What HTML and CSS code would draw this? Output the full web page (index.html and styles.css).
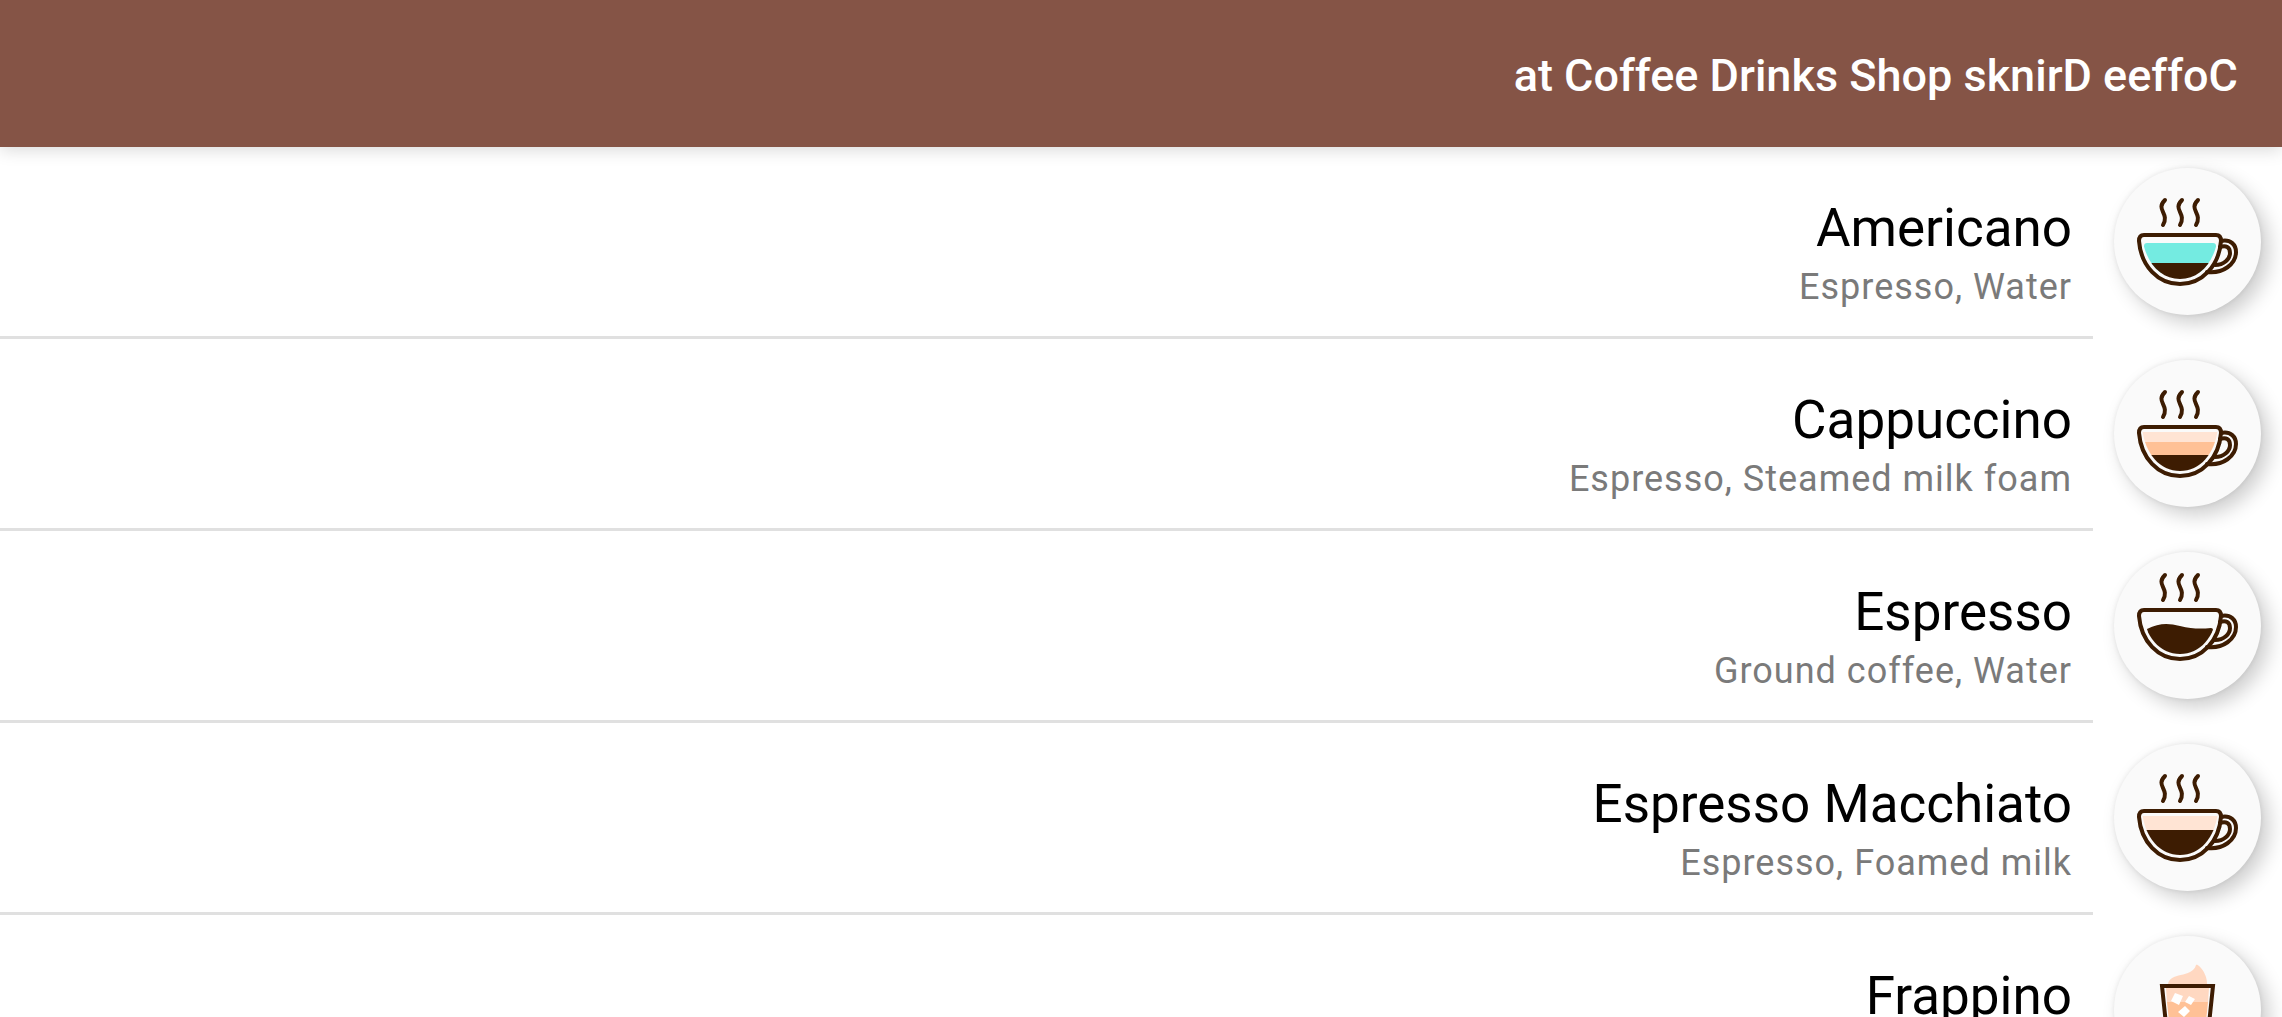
FILE: index.html
```html
<!DOCTYPE html>
<html lang="en" dir="rtl">
<head>
<meta charset="utf-8">
<meta name="viewport" content="width=device-width, initial-scale=1">
<title>Coffee Drinks</title>
<link rel="stylesheet" href="styles.css">
</head>
<body>
<svg class="defs" aria-hidden="true">
  <defs>
    <clipPath id="bowl"><path d="M28 68H104C101 94 86 111 66 111S31 94 28 68z"/></clipPath>
    <g id="cup" class="line">
      <path d="M30 67H102q5 0 5 6C105 98 88 116 66 116S27 98 25 73q0-6 5-6z"/>
      <path d="M107 73C117 71 122 77 122 84C122 96 109 106 93 104"/>
      <path d="M106 79C112 77 116 79 116 85C116 91 110 97 101 97"/>
      <path d="M51 32C41 42 56 45 49 57"/>
      <path d="M68 32C58 42 73 45 66 57"/>
      <path d="M84 32C74 42 89 45 82 57"/>
    </g>
  </defs>
</svg>
<header class="app-bar"><h1 class="app-title">at Coffee Drinks Shop sknirD eeffoC</h1></header>
<main>
  <ul class="drinks">
    <li class="drink">
      <svg class="avatar" viewBox="0 0 147 147" role="img" aria-label="Americano">
        <g clip-path="url(#bowl)"><rect class="water" x="30" y="75" width="72" height="30" rx="3"/><path class="coffee" d="M20 95h100v20H20z"/></g>
        <use href="#cup"/>
      </svg>
      <div class="text"><h2 class="name">Americano</h2><p class="ingredients">Espresso, Water</p></div>
    </li>
    <li class="drink">
      <svg class="avatar" viewBox="0 0 147 147" role="img" aria-label="Cappuccino">
        <g clip-path="url(#bowl)"><path class="foam" d="M20 72h100v11H20z"/><path class="milk" d="M20 82h100v14H20z"/><path class="coffee" d="M20 95h100v20H20z"/></g>
        <use href="#cup"/>
      </svg>
      <div class="text"><h2 class="name">Cappuccino</h2><p class="ingredients">Espresso, Steamed milk foam</p></div>
    </li>
    <li class="drink">
      <svg class="avatar" viewBox="0 9 147 147" role="img" aria-label="Espresso">
        <g clip-path="url(#bowl)"><path class="coffee" d="M33 86C45 80 54 80 66 83S87 86 97 85q2 0 2 2L90 115H40z"/></g>
        <use href="#cup"/>
      </svg>
      <div class="text"><h2 class="name">Espresso</h2><p class="ingredients">Ground coffee, Water</p></div>
    </li>
    <li class="drink">
      <svg class="avatar" viewBox="0 0 147 147" role="img" aria-label="Espresso Macchiato">
        <g clip-path="url(#bowl)"><path class="foam" d="M20 72h100v15H20z"/><path class="coffee" d="M20 86h100v30H20z"/></g>
        <use href="#cup"/>
      </svg>
      <div class="text"><h2 class="name">Espresso Macchiato</h2><p class="ingredients">Espresso, Foamed milk</p></div>
    </li>
    <li class="drink">
      <svg class="avatar" viewBox="0 0 147 147" role="img" aria-label="Frappino">
        <path class="cream" d="M54 49C55 35 78 43 82 29C84 27 94 38 93 49z"/>
        <path class="cream" d="M52 52H95L94 66H53z"/>
        <path class="milk" d="M53 66H94L89 114H58z"/>
        <path class="ice" d="M61 57l8 3-4 9-8-4zM75 60l6 3-4 6-6-3zM71 70l5 5-6 6-6-5z"/>
        <path class="line glass" d="M48 50H99L92 117H55z"/>
      </svg>
      <div class="text"><h2 class="name">Frappino</h2></div>
    </li>
  </ul>
</main>
</body>
</html>
```
FILE: styles.css
```css
* { box-sizing: border-box; }
body {
  margin: 0;
  height: 100vh;
  overflow: hidden;
  display: flex;
  flex-direction: column;
  background: #fff;
  font-family: Roboto, sans-serif;
}
main { flex: 1; min-height: 0; overflow: hidden; }
.defs { position: absolute; width: 0; height: 0; }
.app-bar {
  flex: none;
  position: relative;
  display: flex;
  align-items: center;
  height: 147px;
  padding: 4px 44px 0;
  background: #855446;
  box-shadow: 0 3px 16px rgba(0, 0, 0, .15);
}
.app-title { margin: 0; color: #fff; font-size: 45px; font-weight: 500; line-height: 60px; }
.drinks { margin: 0; padding: 0; list-style: none; }
.drink { display: flex; height: 192px; }
.avatar {
  flex: none;
  width: 147px;
  height: 147px;
  margin: 21px;
  border-radius: 50%;
  background: #fafafa;
  box-shadow: 8px 8px 20px rgba(0, 0, 0, .2), 0 0 5px rgba(0, 0, 0, .08);
}
.text { flex: 1; min-width: 0; padding: 49px 21px 0; border-bottom: 3px solid #e0e0e0; }
.name { margin: 0; color: #000; font-size: 53px; font-weight: 400; line-height: 64px; }
.ingredients { margin: 0; color: #7a7a7a; font-size: 36px; letter-spacing: 1px; line-height: 54px; }
.line { fill: none; stroke: #3d1c02; stroke-width: 4; stroke-linecap: round; stroke-linejoin: round; }
.glass { stroke-linejoin: miter; }
.water { fill: #74ebe1; }
.coffee { fill: #3d1c02; }
.foam { fill: #ffe4d4; }
.milk { fill: #ffc196; }
.cream { fill: #ffd8c1; }
.ice { fill: #fff; }
```
